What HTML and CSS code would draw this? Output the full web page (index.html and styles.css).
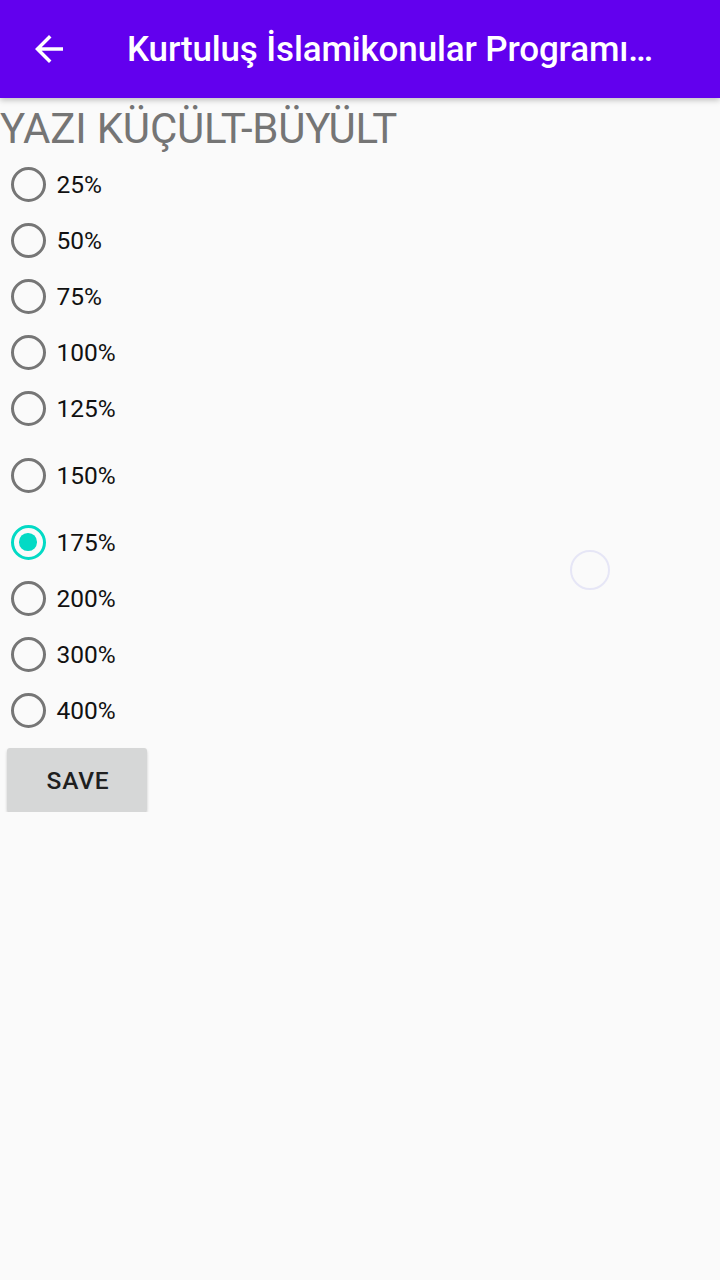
FILE: index.html
```html
<!DOCTYPE html>
<html>
<head>
<meta charset="utf-8">
<link rel="stylesheet" href="styles.css">
</head>
<body>
<header class="appbar">
  <svg class="back" viewBox="0 0 24 24" width="42" height="42"><path d="M20 11H7.83l5.59-5.59L12 4l-8 8 8 8 1.41-1.41L7.83 13H20v-2z" fill="#fff"/></svg>
  <div class="title">Kurtuluş İslamikonular Programı…</div>
</header>
<main class="content">
  <h1 class="heading">YAZI KÜÇÜLT-BÜYÜLT</h1>
  <div class="group">
    <div class="row"><span class="radio"></span><span class="label">25%</span></div>
    <div class="row"><span class="radio"></span><span class="label">50%</span></div>
    <div class="row"><span class="radio"></span><span class="label">75%</span></div>
    <div class="row"><span class="radio"></span><span class="label">100%</span></div>
    <div class="row"><span class="radio"></span><span class="label">125%</span></div>
    <div class="row spaced"><span class="radio"></span><span class="label">150%</span></div>
    <div class="row spaced"><span class="radio checked"></span><span class="label">175%</span></div>
    <div class="row"><span class="radio"></span><span class="label">200%</span></div>
    <div class="row"><span class="radio"></span><span class="label">300%</span></div>
    <div class="row"><span class="radio"></span><span class="label">400%</span></div>
  </div>
  <button class="save">SAVE</button>
  <span class="ripple"></span>
</main>
</body>
</html>
```
FILE: styles.css
```css
html, body {
  margin: 0;
  padding: 0;
  background: #fafafa;
  font-family: Roboto, "Liberation Sans", sans-serif;
}
.appbar {
  height: 98px;
  background: #6200ee;
  display: flex;
  align-items: center;
  box-shadow: 0 2px 6px rgba(0,0,0,0.25);
  position: relative;
  z-index: 1;
}
.back {
  margin-left: 28px;
  margin-right: 57px;
  flex: none;
}
.title {
  color: #fff;
  font-size: 35px;
  font-weight: 500;
  white-space: nowrap;
  overflow: hidden;
  letter-spacing: -0.15px;
}
.content {
  position: relative;
  padding-top: 6px;
}
.heading {
  margin: 0;
  font-size: 42px;
  font-weight: 400;
  color: #757575;
  line-height: 49px;
  letter-spacing: -0.2px;
}
.group {
  margin-top: 3px;
  display: flex;
  flex-direction: column;
}
.row {
  height: 56px;
  display: flex;
  align-items: center;
}
.row.spaced {
  margin-top: 11px;
}
.radio {
  box-sizing: border-box;
  width: 35px;
  height: 35px;
  border: 3.5px solid #767676;
  border-radius: 50%;
  margin-left: 10.5px;
  margin-right: 11px;
  display: flex;
  align-items: center;
  justify-content: center;
}
.radio.checked {
  border-color: #03dac5;
}
.radio.checked::after {
  content: "";
  width: 17.5px;
  height: 17.5px;
  border-radius: 50%;
  background: #03dac5;
}
.label {
  font-size: 24.5px;
  color: #111;
}
.save {
  margin: 10px 0 0 7px;
  width: 140px;
  height: 64px;
  border: none;
  border-radius: 3px;
  background: #d6d7d7;
  color: #1f1f1f;
  font-family: Roboto, "Liberation Sans", sans-serif;
  font-size: 24.5px;
  font-weight: 500;
  letter-spacing: 0.8px;
  padding: 0 0 0 2px;
  box-shadow: 0 2px 3px rgba(0,0,0,0.2);
  display: block;
}
.ripple {
  position: absolute;
  left: 570px;
  top: 452px;
  width: 40px;
  height: 40px;
  box-sizing: border-box;
  border: 2px solid #e6e6f6;
  border-radius: 50%;
}
```
